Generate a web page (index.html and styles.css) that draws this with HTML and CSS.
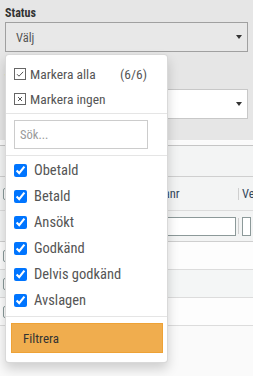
FILE: index.html
```html
<!DOCTYPE html>
<html lang="sv">
<head>
<meta charset="utf-8">
<link rel="stylesheet" href="styles.css">
</head>
<body>
<div class="page">
  <div class="field">
    <label class="lbl">Status</label>
    <div class="select muted"><span>Välj</span><span class="caret"></span></div>
  </div>
  <div class="field f2">
    <label class="lbl">Typ</label>
    <div class="select white"><span></span><span class="caret"></span></div>
  </div>
  <div class="panel">
    <div class="toolbar"></div>
    <div class="grid">
      <div class="tr head">
        <div class="td"><span class="cb"></span></div>
        <div class="td"></div>
        <div class="td num">Fakturanr</div>
        <div class="td"><i class="vsep"></i><span>Verifikat</span></div>
      </div>
      <div class="tr filter">
        <div class="td"></div>
        <div class="td"><span class="finput"></span></div>
        <div class="td"><span class="finput"></span></div>
        <div class="td"><i class="vsep tall"></i><span class="finput"></span></div>
      </div>
      <div class="tr row">
        <div class="td"><span class="cb"></span></div>
        <div class="td"></div><div class="td"></div><div class="td"></div>
      </div>
      <div class="tr row alt">
        <div class="td"><span class="cb"></span></div>
        <div class="td"></div><div class="td"></div><div class="td"></div>
      </div>
      <div class="tr row">
        <div class="td"><span class="cb"></span></div>
        <div class="td"></div><div class="td"></div><div class="td"></div>
      </div>
    </div>
  </div>

  <div class="popup">
    <div class="opt-row">
      <svg class="mini" width="12" height="12" viewBox="0 0 12 12"><rect x="0.5" y="0.5" width="11" height="11" fill="#fff" stroke="#666"/><path d="M3 6.2 L5 8.2 L9.2 3.8" fill="none" stroke="#555" stroke-width="1"/></svg>
      <span class="otext">Markera alla</span>
      <span class="count">(6/6)</span>
    </div>
    <div class="opt-row">
      <svg class="mini" width="12" height="12" viewBox="0 0 12 12"><rect x="0.5" y="0.5" width="11" height="11" fill="#fff" stroke="#666"/><path d="M4 4 L8 8 M8 4 L4 8" fill="none" stroke="#555" stroke-width="1"/></svg>
      <span class="otext">Markera ingen</span>
    </div>
    <div class="hsep"></div>
    <input class="search" type="text" placeholder="Sök...">
    <div class="hsep s2"></div>
    <ul class="list">
      <li><input type="checkbox" checked><span>Obetald</span></li>
      <li><input type="checkbox" checked><span>Betald</span></li>
      <li><input type="checkbox" checked><span>Ansökt</span></li>
      <li><input type="checkbox" checked><span>Godkänd</span></li>
      <li><input type="checkbox" checked><span>Delvis godkänd</span></li>
      <li><input type="checkbox" checked><span>Avslagen</span></li>
    </ul>
    <div class="hsep s3"></div>
    <button class="btn" type="button">Filtrera</button>
  </div>
</div>
</body>
</html>
```
FILE: styles.css
```css
* { box-sizing: border-box; }
html, body { margin: 0; padding: 0; }
body {
  background: #e6e6e6;
  font-family: "Roboto Condensed", Roboto, "Noto Sans", sans-serif;
  font-stretch: 88%;
  width: 253px;
  height: 376px;
  overflow: hidden;
}
.page { position: relative; height: 376px; }

.field { padding: 6px 5px 0; }
.f2 { padding-top: 20px; }
.lbl {
  display: block;
  font-weight: 700;
  font-size: 12px;
  line-height: 14px;
  height: 14px;
  color: #333;
  margin-bottom: 2px;
}
.f2 .lbl { margin-bottom: 3px; }
.select {
  height: 30px;
  border: 1px solid #a0a0a0;
  display: flex;
  align-items: center;
  justify-content: space-between;
  padding: 0 5px 0 10px;
  font-size: 12.5px;
  color: #555;
}
.select.muted { background: #e8e8e8; }
.select.white { background: #fff; border-color: #c8c8c8; }
.caret {
  width: 0; height: 0;
  border-top: 4px solid #333;
  border-left: 3.5px solid transparent;
  border-right: 3.5px solid transparent;
}

.panel {
  margin-top: 21px;
  border-top: 1px solid #fbfbfb;
  background: #fafafa;
  padding-top: 4px;
  height: 240px;
}
.toolbar {
  height: 32px;
  background: #f3f4f4;
  border-top: 1px solid #c5c5c5;
  border-bottom: 1px solid #cfcfcf;
}
.tr {
  display: grid;
  grid-template-columns: 20px 103px 115px 1fr;
  border-bottom: 1px solid #dcdcdc;
}
.td {
  display: flex;
  align-items: center;
  min-width: 0;
  overflow: hidden;
  white-space: nowrap;
}
.td:first-child { padding-left: 3px; }
.head { height: 34px; background: #f3f4f4; font-size: 12.5px; color: #34495e; }
.head .td { padding-left: 4px; }
.head .td.num { padding-left: 10px; }
.head .td:first-child { padding-left: 3px; }
.head .td:last-child { padding-left: 0; }
.filter { height: 31px; background: #f3f4f4; border-bottom-color: #cfcfcf; }
.filter .td:last-child { padding-left: 0; }
.row { height: 28px; background: #fdfdfd; }
.row.alt { background: #f4f6f6; }
.cb {
  display: block;
  width: 12px; height: 12px;
  border: 1px solid #8a9a9a;
  border-radius: 2px;
  background: #fff;
  flex: none;
}
.vsep {
  display: block;
  width: 1px;
  height: 12px;
  background: #cfcfcf;
  margin-right: 3px;
  flex: none;
}
.vsep.tall { height: 16px; }
.finput {
  display: block;
  height: 19px;
  flex: 1;
  border: 1px solid #8c9999;
  background: #fff;
  margin-right: 2px;
}

.popup {
  position: absolute;
  left: 5px;
  top: 54px;
  width: 163px;
  height: 309px;
  background: #fff;
  border: 1px solid rgba(0,0,0,.15);
  border-radius: 4px;
  box-shadow: 0 6px 12px rgba(0,0,0,.175);
  padding-top: 6px;
  color: #555;
}
.opt-row {
  display: flex;
  align-items: center;
  height: 25px;
  padding: 0 20px 0 8px;
  font-size: 13.5px;
}
.mini { flex: none; margin-right: 4px; }
.count { margin-left: auto; }
.hsep { height: 1px; background: #e5e5e5; margin-top: 2px; }
.hsep.s2 { margin-top: 6px; }
.hsep.s3 { margin-top: 3px; }
.search {
  display: block;
  margin: 6px 0 0 8px;
  width: 134px;
  height: 29px;
  border: 1px solid #ccc;
  border-radius: 0;
  padding: 0 5px;
  font-family: inherit;
  font-size: 12.5px;
  color: #555;
  outline: none;
}
.search::placeholder { color: #999; }
.list { list-style: none; margin: 1px 0 0; padding: 0; }
.list li {
  display: flex;
  align-items: center;
  height: 26px;
  padding-left: 8px;
  font-size: 14.5px;
  color: #555;
}
.list input {
  margin: 0 7px 0 0;
  width: 13px;
  height: 13px;
  flex: none;
}
.btn {
  display: block;
  margin: 6px 4px 0 5px;
  width: 152px;
  height: 30px;
  background: #f0ad4e;
  border: 1px solid #eea236;
  border-radius: 0;
  text-align: left;
  padding: 0 0 0 11px;
  font-family: inherit;
  font-size: 13px;
  color: #333;
}
```
